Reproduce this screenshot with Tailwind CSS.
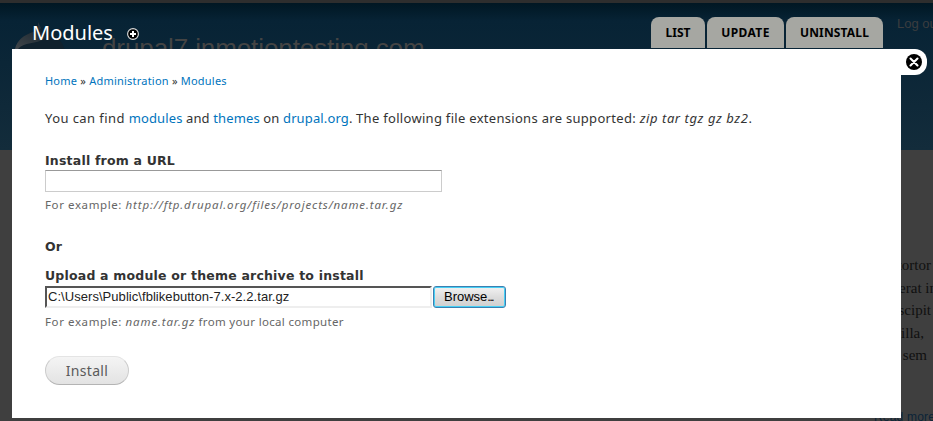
<!DOCTYPE html>
<html lang="en">
<head>
<meta charset="utf-8">
<title>Modules</title>
<script src="https://cdn.jsdelivr.net/npm/@tailwindcss/browser@4"></script>
</head>
<body class="bg-[#3f3f3f]">
<div class="relative w-[933px] h-[421px] overflow-hidden bg-[#3f3f3f] whitespace-nowrap font-['Noto_Sans','Open_Sans',sans-serif] text-[#333]">
  <!-- Dimmed page behind the overlay -->
  <div class="h-[3px] bg-[#2e2e2e]"></div>
  <div class="relative h-[147px] bg-linear-to-b from-[#011723] via-[#072335] via-12% to-[#132c3b]">
    <svg class="absolute left-[12px] top-[19px]" width="58" height="58" viewBox="0 0 58 58">
      <defs><linearGradient id="shine" x1="1" y1="0" x2="0" y2="1"><stop offset="0" stop-color="#1b2831"/><stop offset="1" stop-color="#41464a"/></linearGradient></defs>
      <path d="M26 0C28 7 34 10 42 14C50 18 53 24 54 38L2 38C1 25 8 16 18 11C24 8 26 5 26 0Z" fill="#10212d"/>
      <path d="M3 27C5 18 12 13 21 10C28 8 36 13 32 17C25 22 11 20 6 27Z" fill="url(#shine)"/>
      <path d="M26 0L29 6L26 9Z" fill="#25333c"/>
    </svg>
    <div class="absolute left-[102px] top-[30px] text-[26px] leading-[30px] tracking-[-0.1px] text-[#444] font-['Liberation_Sans',sans-serif]">drupal7.inmotiontesting.com</div>
    <div class="absolute left-[897px] top-[12px] text-[13px] leading-[18px] text-[#3b3d3f] font-['Liberation_Sans',sans-serif]">Log out</div>
  </div>
  <div class="absolute left-[804px] top-[254px] w-[127px] text-right text-[15px] leading-[22.5px] text-[#101010] font-['Liberation_Serif',serif]">
    <div>tortor</div><div class="-mr-[6px]">placerat in</div><div>suscipit</div><div class="mr-[7px]">fringilla,</div><div class="mr-[4px]">a sem</div>
  </div>
  <div class="absolute left-[874px] top-[408px] text-[12px] leading-[18px] tracking-[0.2px] text-[#0b2438] font-['Liberation_Sans',sans-serif]">Read more</div>

  <!-- Overlay -->
  <div class="absolute left-[12px] top-0 w-[889px]">
    <div class="h-[49px] flex items-end justify-between pr-[18px] pl-[20px]">
      <div class="flex items-center gap-[14px] pb-[3px]">
        <h1 class="text-[20px] leading-[26px] text-white w-[81px]">Modules</h1>
        <svg width="12" height="12" viewBox="0 0 12 12" class="mt-[2px]"><circle cx="6" cy="6" r="5.4" fill="#000" stroke="#ddd" stroke-width="1.1"/><path d="M6 3v6M3 6h6" stroke="#fff" stroke-width="2"/></svg>
      </div>
      <div class="flex gap-[2px] pb-px text-[12px] font-bold leading-[32px] text-black text-center">
        <div class="w-[54px] h-[31px] rounded-t-[8px] bg-[#a6a7a2]">LIST</div>
        <div class="w-[77px] h-[31px] rounded-t-[8px] bg-[#a6a7a2] tracking-[0.4px]">UPDATE</div>
        <div class="w-[97px] h-[31px] rounded-t-[8px] bg-[#a6a7a2] tracking-[0.15px]">UNINSTALL</div>
      </div>
    </div>
    <div class="relative h-[369px] bg-white pl-[33px] pt-[24px]">
      <div class="absolute left-[889px] top-0 w-[26px] h-[26px] rounded-r-[12px] bg-white">
        <svg class="mt-[5px] ml-[5px]" width="16" height="16" viewBox="0 0 16 16"><circle cx="8" cy="8" r="8" fill="#000"/><path d="M4.5 4.5l7 7M11.5 4.5l-7 7" stroke="#fff" stroke-width="2.1" stroke-linecap="round"/></svg>
      </div>
      <nav class="text-[11px] leading-[16px] tracking-[0.22px]"><a class="text-[#0074bd]">Home</a> » <a class="text-[#0074bd]">Administration</a> » <a class="text-[#0074bd]">Modules</a></nav>
      <p class="mt-[20px] mb-[25px] text-[13px] leading-[18px] tracking-[0.13px]"><span class="tracking-[0.42px]">You can find </span><a class="text-[#0074bd]">modules</a> and <a class="text-[#0074bd]">themes</a> on <a class="text-[#0074bd]">drupal.org</a>. <span class="tracking-[0.3px]">The following file extensions are supported: </span><em class="tracking-[0.58px]">zip tar tgz gz bz2</em>.</p>
      <div class="h-[18px] font-['DejaVu_Sans',sans-serif] text-[12.5px] leading-[17px] font-bold tracking-[0.2px]">Install from a URL</div>
      <div class="w-[397px] h-[22px] border border-[#ccc] border-t-[#999] bg-white"></div>
      <div class="mt-[5px] text-[11.5px] leading-[16px] tracking-[0.6px] text-[#666]">For example: <em class="tracking-[0.85px]">http://ftp.drupal.org/files/projects/name.tar.gz</em></div>
      <div class="mt-[25px] h-[16px] font-['DejaVu_Sans',sans-serif] text-[12.5px] leading-[17px] font-bold tracking-[0.2px]">Or</div>
      <div class="mt-[13px] h-[19px] font-['DejaVu_Sans',sans-serif] text-[12.5px] leading-[17px] font-bold tracking-[0.2px]">Upload a module or theme archive to install</div>
      <div class="flex gap-px font-['Liberation_Sans',sans-serif] text-[13px] text-black">
        <div class="w-[387px] h-[22px] border-2 border-[#555] border-r-[#eee] border-b-[#eee] pl-[1px] leading-[18px] tracking-[0.05px] text-[#222]">C:\Users\Public\fblikebutton-7.x-2.2.tar.gz</div>
        <div class="w-[73px] h-[22px] rounded-[3px] border border-[#3c7fb1] bg-linear-to-b from-[#f2f2f2] from-0% via-[#ddd] via-50% to-[#cfcfcf] shadow-[inset_0_0_0_1px_#46d0f5] pl-[10px] leading-[20px]">Browse<span class="tracking-[-1.8px]">...</span></div>
      </div>
      <div class="mt-[6px] text-[11.5px] leading-[16px] tracking-[0.6px] text-[#666]">For example: <em class="tracking-[0.85px]">name.tar.gz</em><span class="tracking-[0.33px]"> from your local computer</span></div>
      <div class="mt-[26px] w-[84px] h-[29px] rounded-full border border-[#ccc] border-t-[#e4e4e4] border-b-[#b4b4b4] bg-linear-to-b from-[#f4f4f4] to-[#e3e3e3] text-center text-[14px] leading-[27px] tracking-[0.3px] text-[#5a5a5a]">Install</div>
    </div>
  </div>
</div>
</body>
</html>
